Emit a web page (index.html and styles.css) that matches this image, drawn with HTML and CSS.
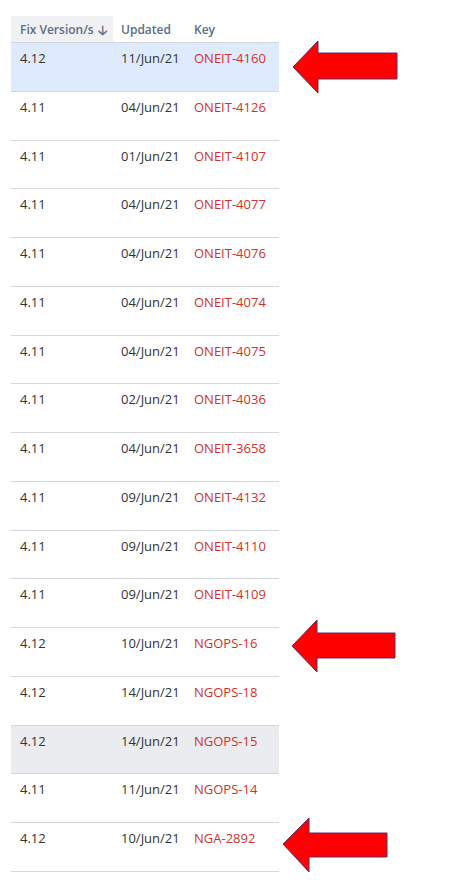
FILE: index.html
```html
<!DOCTYPE html>
<html lang="en">
<head>
    <meta charset="UTF-8">
    <title>Issues</title>
    <link rel="stylesheet" href="styles.css">
</head>
<body>
    <!-- Issue list -->
    <div class="sheet">
        <table class="issues">
            <colgroup>
                <col class="col-version">
                <col class="col-date">
                <col class="col-key">
            </colgroup>
            <thead>
                <tr>
                    <th class="sorted">Fix Version/s <span class="sort-arrow">&#129123;</span></th>
                    <th>Updated</th>
                    <th>Key</th>
                </tr>
            </thead>
            <tbody>
                <tr class="selected"><td>4.12</td><td>11/Jun/21</td><td class="key">ONEIT-4160</td></tr>
                <tr><td>4.11</td><td>04/Jun/21</td><td class="key">ONEIT-4126</td></tr>
                <tr><td>4.11</td><td>01/Jun/21</td><td class="key">ONEIT-4107</td></tr>
                <tr><td>4.11</td><td>04/Jun/21</td><td class="key">ONEIT-4077</td></tr>
                <tr><td>4.11</td><td>04/Jun/21</td><td class="key">ONEIT-4076</td></tr>
                <tr><td>4.11</td><td>04/Jun/21</td><td class="key">ONEIT-4074</td></tr>
                <tr><td>4.11</td><td>04/Jun/21</td><td class="key">ONEIT-4075</td></tr>
                <tr><td>4.11</td><td>02/Jun/21</td><td class="key">ONEIT-4036</td></tr>
                <tr><td>4.11</td><td>04/Jun/21</td><td class="key">ONEIT-3658</td></tr>
                <tr><td>4.11</td><td>09/Jun/21</td><td class="key">ONEIT-4132</td></tr>
                <tr><td>4.11</td><td>09/Jun/21</td><td class="key">ONEIT-4110</td></tr>
                <tr><td>4.11</td><td>09/Jun/21</td><td class="key">ONEIT-4109</td></tr>
                <tr><td>4.12</td><td>10/Jun/21</td><td class="key">NGOPS-16</td></tr>
                <tr><td>4.12</td><td>14/Jun/21</td><td class="key">NGOPS-18</td></tr>
                <tr class="hover"><td>4.12</td><td>14/Jun/21</td><td class="key">NGOPS-15</td></tr>
                <tr><td>4.11</td><td>11/Jun/21</td><td class="key">NGOPS-14</td></tr>
                <tr><td>4.12</td><td>10/Jun/21</td><td class="key">NGA-2892</td></tr>
            </tbody>
        </table>

        <!-- Annotation arrows -->
        <svg class="arrow arrow-1" width="106" height="54" viewBox="0 0 106 54">
            <polygon points="1,27 26,1 26,13 105,13 105,39 26,39 26,53" />
        </svg>
        <svg class="arrow arrow-2" width="106" height="54" viewBox="0 0 106 54">
            <polygon points="1,27 26,1 26,14 104,14 104,39 26,39 26,53" />
        </svg>
        <svg class="arrow arrow-3" width="106" height="56" viewBox="0 0 106 56">
            <polygon points="1,27 27,1 27,16 105,16 105,40 27,40 27,55" />
        </svg>
    </div>
</body>
</html>
```

FILE: styles.css
```css
/* Page */
body {
    margin: 0;
    background: #fff;
    font-family: 'Open Sans', 'Noto Sans', sans-serif;
    font-size: 13px;
    color: #333;
}

.sheet {
    position: relative;
    padding: 16px 0 0 11px;
}

/* Table */
.issues {
    border-collapse: collapse;
    table-layout: fixed;
    width: 268px;
}

.col-version { width: 102px; }
.col-date { width: 73px; }
.col-key { width: 93px; }

.issues th {
    height: 26px;
    padding: 0 0 0 8px;
    text-align: left;
    font-weight: 600;
    font-size: 12px;
    color: #5e6c84;
    white-space: nowrap;
    overflow: visible;
}

.issues th.sorted {
    padding-left: 9px;
    background: #f0f1f3;
}

.sort-arrow {
    display: inline-block;
    width: 12px;
    height: 12px;
    vertical-align: -1px;
    margin-left: 1px;
    font-size: 13px;
    line-height: 12px;
    font-family: 'DejaVu Sans', sans-serif;
    font-weight: 700;
}

.issues td {
    height: 41.75px;
    padding: 6px 0 0 8px;
    vertical-align: top;
    line-height: 18px;
    border-bottom: 1px solid #d4d6da;
    white-space: nowrap;
}

.issues td:first-child {
    padding-left: 9px;
}

.issues thead tr {
    border-bottom: 1px solid #d4d6da;
}

.issues .key {
    color: #d0312d;
}

.issues tr.selected td {
    background: #deebff;
}

.issues tr.hover td {
    background: #ebecf0;
}

/* Arrows */
.arrow {
    position: absolute;
}

.arrow polygon {
    fill: #ff0000;
    stroke: #5a2a6e;
    stroke-width: 1;
}

.arrow-1 {
    left: 292px;
    top: 40px;
}

.arrow-2 {
    left: 291px;
    top: 619px;
}

.arrow-3 {
    left: 282px;
    top: 817px;
}
```
